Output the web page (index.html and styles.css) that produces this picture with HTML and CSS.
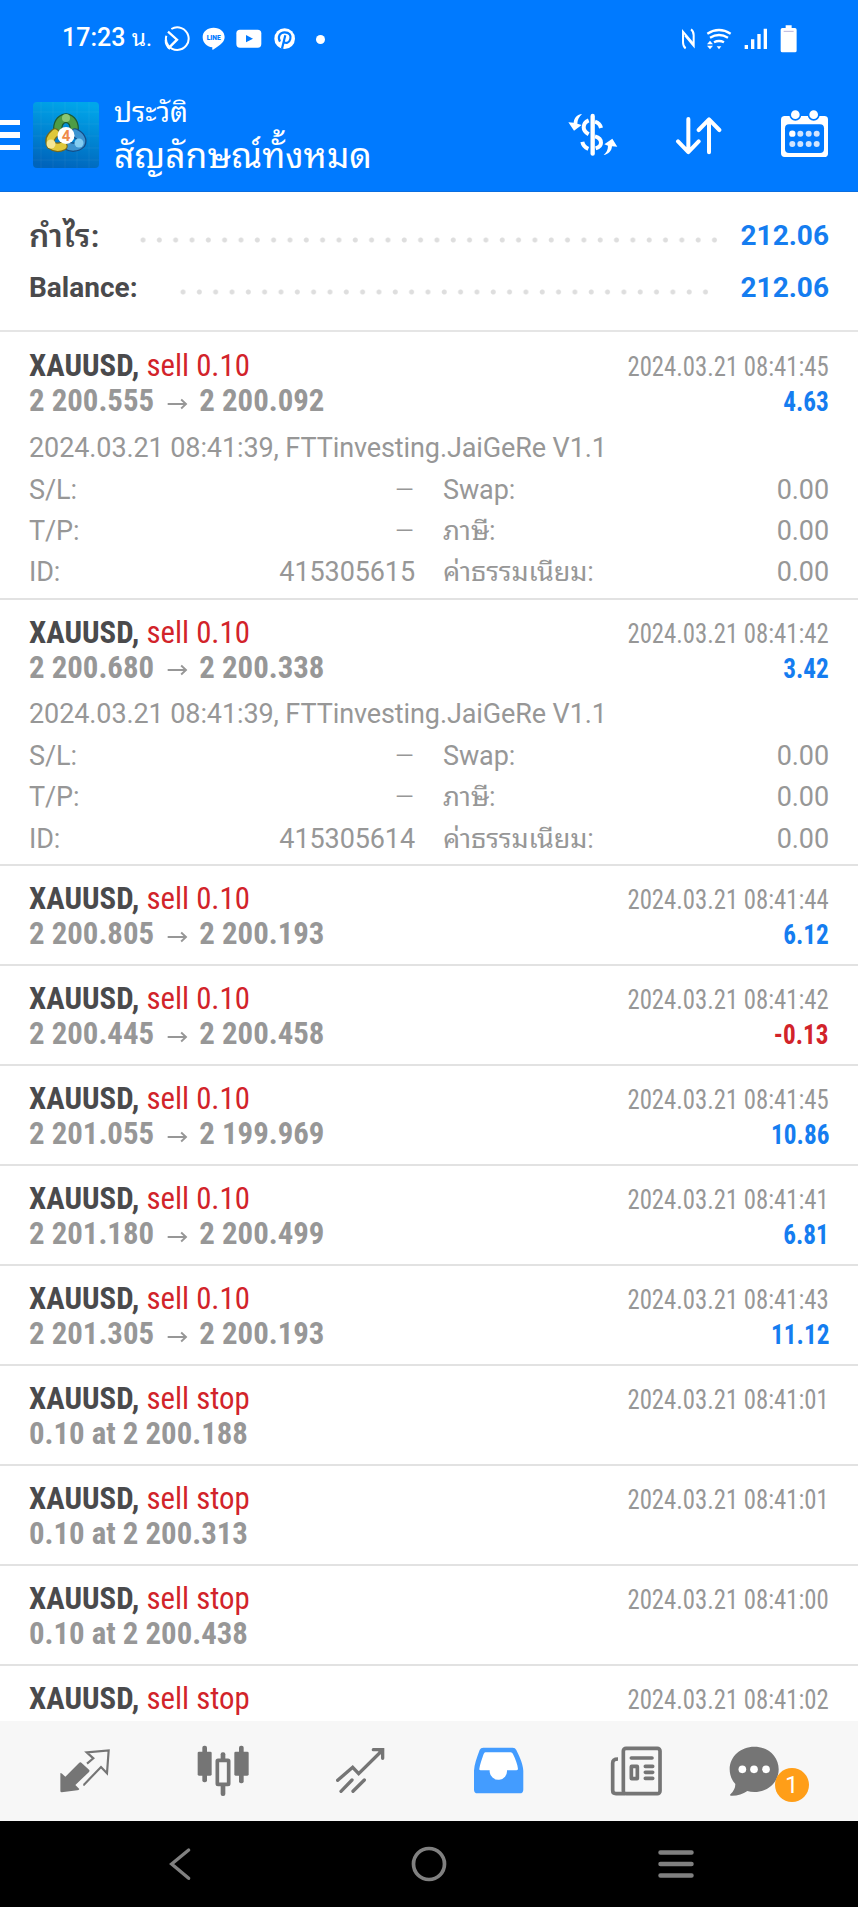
FILE: index.html
```html
<!DOCTYPE html>
<html lang="th">

<head>
    <meta charset="UTF-8">
    <meta name="viewport" content="width=device-width, initial-scale=1.0">
    <title>History</title>
    <link rel="stylesheet" href="styles.css">
</head>

<body>
    <div class="app">
        <header class="header">
            <!-- Phone status bar -->
            <div class="status-bar">
                <span class="clock">17:23 <span class="clock-th">น.</span></span>
                <svg class="st-chart" viewBox="493 75 80 80" width="26.7" height="26.7" fill="none" stroke="#fff" stroke-width="6">
                    <path d="M515 84A34 34 0 1 1 500 104"/>
                    <path d="M498 116a34 34 0 0 0 13 28"/>
                    <path d="M505 92l27 24-26 26" stroke-width="7"/>
                </svg>
                <svg class="st-line" viewBox="607 82 70 70" width="23.3" height="23.3">
                    <path fill="#fff" d="M642 84c19 0 33 12 33 28 0 7-3 13-8 18-6 7-19 15-27 20-3 1-2-2-2-7-17-2-29-14-29-31 0-16 14-28 33-28z"/>
                    <text x="642" y="120" text-anchor="middle" class="line-word">LINE</text>
                </svg>
                <svg class="st-video" viewBox="710 88 78 58" width="26" height="19.3">
                    <rect x="711" y="90" width="75" height="54" rx="11" fill="#fff"/>
                    <path d="M740 106l21 11-21 11z" fill="#007aff"/>
                </svg>
                <svg class="st-pin" viewBox="825 85 64 64" width="21.3" height="21.3" fill="none">
                    <circle cx="857" cy="117" r="31" fill="#fff"/>
                    <path d="M843 126c-8-14-1-28 14-28 14 0 20 9 17 20-3 12-14 15-20 8M859 107l-10 40" stroke="#007aff" stroke-width="6.5"/>
                </svg>
                <span class="st-dot"></span>
                <svg class="st-nfc" viewBox="756 84 44 66" width="14.7" height="22" fill="none" stroke="#fff" stroke-width="6">
                    <path d="M770 145c-6-4-8-10-8-18V95l31 37"/>
                    <path d="M786 88c6 4 8 10 8 18v31l-26-31"/>
                </svg>
                <svg class="st-wifi" viewBox="830 82 78 68" width="26" height="22.7" fill="none" stroke="#fff" stroke-width="7">
                    <path d="M834 99q35-22 70 0M842 111q27-16 54 0M854 125q15-8 30 0"/>
                    <path d="M833 131l9-11 9 11zM833 135h18l-9 11zM862 137h14l-7 9z" fill="#fff" stroke="none"/>
                </svg>
                <svg class="st-signal" viewBox="944 84 72 66" width="24" height="22" fill="#fff">
                    <path d="M946 135h10v12h-10zM965 118h10v29h-10zM984 102h10v45h-10zM1003 86h10v61h-10z"/>
                </svg>
                <svg class="st-battery" viewBox="1051 74 52 84" width="17.3" height="28" fill="#fff">
                    <path d="M1068 75h18v8h10q5 0 5 5v63q0 5-5 5h-38q-5 0-5-5V88q0-5 5-5h10z"/>
                    <path d="M1062 93h30" stroke="#b9b4dc" stroke-width="3"/>
                </svg>
            </div>

            <!-- Title and actions -->
            <div class="toolbar">
                <div class="menu"><i></i><i></i><i></i></div>
                <svg class="logo" viewBox="0 0 66 66" width="66" height="66">
                    <defs>
                        <linearGradient id="logo-bg" x1="0.6" y1="0" x2="0.4" y2="1">
                            <stop offset="0" stop-color="#00a6ea"/>
                            <stop offset="1" stop-color="#0064bb"/>
                        </linearGradient>
                    </defs>
                    <rect width="66" height="66" rx="4" fill="url(#logo-bg)"/>
                    <path d="M8 0v66M20 0v66M32 0v66M44 0v66M56 0v66M0 10h66M0 22h66M0 34h66M0 46h66M0 58h66" stroke="#fff" stroke-opacity=".05"/>
                    <g fill="none" stroke-linecap="round">
                        <path d="M25 29c-1-7 2-12 8-13 6 1 9 6 8 13" stroke="#1d5a35" stroke-width="9.500"/>
                        <path d="M25 29c-1-7 2-12 8-13 6 1 9 6 8 13" stroke="#4e9c45" stroke-width="7"/>
                        <path d="M42 31c6 3 8 7 6 11-4 4-10 4-15 1" stroke="#154c85" stroke-width="9.500"/>
                        <path d="M42 31c6 3 8 7 6 11-4 4-10 4-15 1" stroke="#3d94d1" stroke-width="7"/>
                        <path d="M22 31c-5 4-6 8-4 12 4 3 8 3 12 1" stroke="#75691c" stroke-width="9.500"/>
                        <path d="M22 31c-5 4-6 8-4 12 4 3 8 3 12 1" stroke="#dfc83b" stroke-width="7"/>
                    </g>
                    <circle cx="33" cy="16" r="4" fill="#8cc673"/>
                    <circle cx="18" cy="42" r="4.500" fill="#f4e795"/>
                    <circle cx="46" cy="41" r="4.500" fill="#83cdf2"/>
                    <circle cx="33" cy="33.500" r="8.500" fill="#fff"/>
                    <text x="33" y="38.500" text-anchor="middle" class="logo-four">4</text>
                </svg>
                <div class="titles">
                    <div class="subtitle">ประวัติ</div>
                    <div class="title">สัญลักษณ์ทั้งหมด</div>
                </div>
                <svg class="act-dollar" viewBox="410 336 156 136" width="52" height="45.3" fill="none" stroke="#fff">
                    <path d="M487 348v113" stroke-width="13" stroke-linecap="round"/>
                    <path d="M512 384c-2-10-9-16-18-19M475 361c-10 4-15 12-15 21 0 10 6 16 15 21M494 409c12 3 18 9 18 19 0 8-6 14-16 17M456 426c2 11 8 17 18 21" stroke-width="12"/>
                    <path d="M455 342c-13 1-24 11-25 26l-16-1 17 25 23-17-13-4c0-12 5-20 14-29zM520 465c13-1 24-11 25-26l16 1-15-24-24 17 11 4c0 12-4 20-13 28z" fill="#fff" stroke="none"/>
                </svg>
                <svg class="act-sort" viewBox="735 342 140 122" width="46.7" height="40.7" fill="none" stroke="#fff" stroke-width="12" stroke-linecap="round" stroke-linejoin="round">
                    <path d="M775 354v98M744 421l31 32 31-32M837 454v-98M806 387l31-32 31 32"/>
                </svg>
                <svg class="act-calendar" viewBox="1048 328 146 146" width="48.7" height="48.7">
                    <rect x="1051" y="349" width="141" height="123" rx="11" fill="#fff"/>
                    <rect x="1063" y="374" width="117" height="86" rx="12" fill="#007aff"/>
                    <g fill="#fff" stroke="#007aff" stroke-width="5">
                        <circle cx="1094" cy="345" r="15.500"/>
                        <circle cx="1149" cy="345" r="15.500"/>
                    </g>
                    <g fill="#cfe4ff">
                        <circle cx="1085" cy="402" r="9.500" fill="#fff"/><circle cx="1109" cy="402" r="9"/><circle cx="1134" cy="402" r="9"/><circle cx="1158" cy="402" r="9"/>
                        <circle cx="1085" cy="433" r="9"/><circle cx="1109" cy="433" r="9"/><circle cx="1134" cy="433" r="9"/><circle cx="1158" cy="433" r="9"/>
                    </g>
                </svg>
            </div>
        </header>

        <!-- Totals -->
        <section class="summary">
            <div class="sum-row">
                <span class="sum-label sum-label-th">กำไร:</span>
                <span class="dots dots-profit"></span>
                <span class="sum-value">212.06</span>
            </div>
            <div class="sum-row">
                <span class="sum-label">Balance:</span>
                <span class="dots dots-balance"></span>
                <span class="sum-value">212.06</span>
            </div>
        </section>

        <!-- Deals, filled in by the script -->
        <main class="deals" id="deals"></main>

        <nav class="tabs">
            <svg class="tab-quotes" viewBox="180 264 152 136" width="50.7" height="45.3">
                <path d="M181 339q4 0 10 7l5 4 41-41q4-4 8 0l22 20q3 3 0 7l-41 39 12 12q-2 4-6 4l-47 6q-4 0-4-4z" fill="#757575"/>
                <path d="M250 373l2 1 51-53 18 19 5-69-66 6 20 18-19 16" fill="none" stroke="#757575" stroke-width="6.500"/>
            </svg>
            <svg class="tab-chart" viewBox="589 255 156 155" width="52" height="51.7" fill="#757575">
                <rect x="605" y="257" width="14" height="110" rx="6"/>
                <rect x="591" y="275" width="42" height="72" rx="4"/>
                <rect x="715" y="257" width="14" height="113" rx="6"/>
                <rect x="701" y="275" width="43" height="72" rx="4"/>
                <rect x="660" y="277" width="14" height="131" rx="6"/>
                <rect x="650" y="301" width="34" height="72" rx="2" fill="#f7f7f7" stroke="#757575" stroke-width="11"/>
            </svg>
            <svg class="tab-trade" viewBox="1005 260 150 142" width="50" height="47.3" fill="none" stroke="#757575" stroke-width="10" stroke-linecap="round">
                <path d="M1013 360l45-39 18 19 72-71M1120 268h28v26M1023 393l33-34M1059 393l34-34"/>
                <path d="M1128 266h22v22z" fill="#757575" stroke="none"/>
            </svg>
            <svg class="tab-history" viewBox="128 260 154 142" width="51.3" height="47.3">
                <path d="M159 262h88q8 0 11 7c12 24 20 44 21 62v57q0 11-11 11H142q-11 0-11-11v-57c1-18 8-38 17-62q3-7 11-7z" fill="#439cff"/>
                <path d="M165 276h76q5 0 7 5c8 16 14 33 15 44q0 5-5 5h-28a26 26 0 0 1-52 5v-5h-27q-5 0-4-5c2-13 8-30 13-44q2-5 5-5z" fill="#fff"/>
            </svg>
            <svg class="tab-news" viewBox="541 255 158 152" width="52.7" height="50.7" fill="none" stroke="#757575" stroke-width="11">
                <rect x="581" y="262" width="110" height="136" rx="8"/>
                <path d="M565 294q-16 0-16 12v82q0 10 10 10h26"/>
                <path d="M605 291h62M647 316h22M647 334h22M647 352h22" stroke-linecap="round"/>
                <rect x="605" y="316" width="18" height="37" rx="1"/>
            </svg>
            <div class="tab-chat">
                <svg viewBox="898 255 152 152" width="50.7" height="50.7">
                    <path d="M974 257c41 0 73 29 73 68s-32 68-73 68q-12 0-21-3c-14 10-32 15-50 14-3-1-2-3 0-5q14-13 14-30c-11-12-17-27-17-44 0-39 33-68 74-68z" fill="#757575"/>
                    <g fill="#fff"><circle cx="938" cy="325" r="11.500"/><circle cx="973" cy="325" r="11.500"/><circle cx="1009" cy="325" r="11.500"/></g>
                </svg>
                <span class="badge">1</span>
            </div>
        </nav>

        <!-- Android buttons -->
        <footer class="system-nav">
            <svg class="nav-back" viewBox="505 560 75 102" width="25" height="34" fill="none" stroke="#808080" stroke-width="10" stroke-linecap="round">
                <path d="M567 569l-51 42 51 43"/>
            </svg>
            <svg class="nav-home" viewBox="0 0 36 36" width="36" height="36" fill="none" stroke="#808080" stroke-width="3.700">
                <circle cx="18" cy="18" r="15.500"/>
            </svg>
            <svg class="nav-recent" viewBox="0 0 36 30" width="36" height="30" stroke="#808080" stroke-width="4.500" stroke-linecap="round">
                <path d="M2.500 3.500h31M2.500 15h31M2.500 26.500h31"/>
            </svg>
        </footer>
    </div>

    <script>
        const deals = [
            { type: "sell 0.10", from: "2 200.555", to: "2 200.092", time: "08:41:45", profit: "4.63", id: "415305615" },
            { type: "sell 0.10", from: "2 200.680", to: "2 200.338", time: "08:41:42", profit: "3.42", id: "415305614" },
            { type: "sell 0.10", from: "2 200.805", to: "2 200.193", time: "08:41:44", profit: "6.12" },
            { type: "sell 0.10", from: "2 200.445", to: "2 200.458", time: "08:41:42", profit: "-0.13" },
            { type: "sell 0.10", from: "2 201.055", to: "2 199.969", time: "08:41:45", profit: "10.86" },
            { type: "sell 0.10", from: "2 201.180", to: "2 200.499", time: "08:41:41", profit: "6.81" },
            { type: "sell 0.10", from: "2 201.305", to: "2 200.193", time: "08:41:43", profit: "11.12" },
            { type: "sell stop", price: "0.10 at 2 200.188", time: "08:41:01" },
            { type: "sell stop", price: "0.10 at 2 200.313", time: "08:41:01" },
            { type: "sell stop", price: "0.10 at 2 200.438", time: "08:41:00" },
            { type: "sell stop", time: "08:41:02" }
        ];

        function renderDetails(deal) {
            return `
                <div class="comment">2024.03.21 08:41:39, FTTinvesting.JaiGeRe V1.1</div>
                <div class="details">
                    <span>S/L:</span><span class="num dash">–</span><span>Swap:</span><span class="num">0.00</span>
                    <span>T/P:</span><span class="num dash">–</span><span>ภาษี:</span><span class="num">0.00</span>
                    <span>ID:</span><span class="num">${deal.id}</span><span>ค่าธรรมเนียม:</span><span class="num">0.00</span>
                </div>
            `;
        }

        function renderDeals() {
            const list = document.getElementById("deals");

            deals.forEach((deal) => {
                const row = document.createElement("div");
                row.className = deal.id ? "deal open" : "deal";

                let price = deal.price || "";
                if (deal.from) {
                    price = `${deal.from}<svg class="arrow" viewBox="0 0 22 12" width="22" height="12"><path d="M1 6h19M15 1.500l5 4.500-5 4.500"/></svg>${deal.to}`;
                }

                let profit = "";
                if (deal.profit) {
                    profit = `<span class="profit ${deal.profit < 0 ? "loss" : ""}">${deal.profit}</span>`;
                }

                row.innerHTML = `
                    <div class="line">
                        <span class="symbol">XAUUSD, <span class="type">${deal.type}</span></span>
                        <span class="time">2024.03.21 ${deal.time}</span>
                    </div>
                    <div class="line">
                        <span class="price">${price}</span>
                        ${profit}
                    </div>
                    ${deal.id ? renderDetails(deal) : ""}
                `;
                list.appendChild(row);
            });
        }

        renderDeals();
    </script>
</body>

</html>
```
FILE: styles.css
```css
* {
    box-sizing: border-box;
}

body {
    margin: 0;
    font-family: Roboto, "Noto Sans Thai Looped", Loma, Garuda, "Noto Sans", sans-serif;
    background-color: #fff;
    color: #4a4a4c;
}

svg {
    display: block;
    flex-shrink: 0;
}

.app {
    display: flex;
    flex-direction: column;
    width: 858px;
    height: 1907px;
    overflow: hidden;
}

/* Header */
.header {
    flex-shrink: 0;
    height: 192px;
    background-color: #007aff;
    border-bottom: 1px solid #0a6ee0;
    color: #fff;
}

.status-bar {
    display: flex;
    align-items: center;
    height: 78px;
    padding-left: 62px;
}

.clock {
    width: 102px;
    font-size: 25px;
    font-weight: 500;
    line-height: 30px;
    margin-top: -2px;
    white-space: nowrap;
}

.clock-th {
    font-size: 23px;
    font-weight: 400;
}

.st-line {
    margin-left: 11px;
}

.line-word {
    font-family: Roboto, sans-serif;
    font-size: 20px;
    font-weight: 900;
    fill: #007aff;
}

.st-video {
    margin-left: 11px;
}

.st-pin {
    margin-left: 12px;
}

.st-dot {
    width: 9px;
    height: 9px;
    margin-left: 21px;
    border-radius: 50%;
    background-color: #fff;
}

.st-nfc {
    margin-left: 356px;
}

.st-wifi {
    margin-left: 10px;
}

.st-signal {
    margin-left: 12px;
}

.st-battery {
    margin-left: 12px;
}

.toolbar {
    display: flex;
    align-items: center;
    height: 114px;
}

.menu {
    display: flex;
    flex-direction: column;
    gap: 7px;
    width: 33px;
}

.menu i {
    width: 20px;
    height: 5.5px;
    background-color: #fff;
}

.titles {
    width: 452px;
    padding-top: 2px;
    padding-left: 15px;
    white-space: nowrap;
}

.subtitle {
    font-size: 28px;
    line-height: 40px;
}

.title {
    font-size: 35.3px;
    line-height: 46px;
}

.logo-four {
    font-family: Roboto, sans-serif;
    font-size: 15px;
    font-weight: 700;
    fill: #ee8a4a;
}

.act-dollar {
    margin-left: 16px;
}

.act-sort {
    margin-left: 56px;
}

.act-calendar {
    margin-left: 58px;
    margin-bottom: 3px;
}

/* Totals */
.summary {
    flex-shrink: 0;
    height: 140px;
    padding: 17px 29px 0;
    border-bottom: 2px solid #e5e5e5;
}

.sum-row {
    display: flex;
    align-items: center;
    height: 52px;
    font-size: 28px;
    font-weight: 700;
}

.sum-label {
    white-space: nowrap;
}

.sum-label-th {
    margin-top: -5px;
    font-size: 32px;
    font-weight: 600;
    letter-spacing: 0.4px;
}

.sum-value {
    color: #157df0;
}

.dots {
    flex-shrink: 0;
    height: 6px;
    margin-top: 10px;
    margin-left: auto;
    background: radial-gradient(circle at 8px 3px, #dedede 2px, transparent 3px) 0 0 / 16.33px 6px repeat-x;
}

.dots-profit {
    width: 588px;
    margin-right: 18px;
}

.dots-balance {
    width: 539px;
    margin-right: 27px;
}

/* Deals */
.deals {
    flex: 1;
    min-height: 0;
    padding-top: 1px;
    overflow: hidden;
}

.deal {
    height: 100px;
    padding: 15px 29px 0;
    border-bottom: 2px solid #e2e2e2;
}

.deal.open {
    height: 266.7px;
}

.line {
    display: flex;
    align-items: baseline;
    justify-content: space-between;
    height: 35px;
    line-height: 35px;
    font-stretch: 75%;
    white-space: nowrap;
}

.symbol {
    font-size: 32px;
    font-weight: 700;
    transform: scaleX(0.963);
    transform-origin: left;
}

.type {
    font-weight: 400;
    color: #d2232a;
}

.time {
    font-size: 27px;
    color: #979797;
    transform: scaleX(0.916);
    transform-origin: right;
}

.price {
    display: flex;
    align-items: center;
    font-size: 32px;
    font-weight: 700;
    color: #979797;
    transform: scaleX(0.963);
    transform-origin: left;
}

.arrow {
    margin: 6px 12px 0 13px;
    fill: none;
    stroke: #979797;
    stroke-width: 2;
}

.profit {
    font-size: 27px;
    font-weight: 700;
    color: #157df0;
    transform: scaleX(0.935);
    transform-origin: right;
}

.profit.loss {
    color: #d2232a;
}

.comment {
    margin-top: 8.5px;
    line-height: 42px;
    font-size: 27px;
    letter-spacing: -0.1px;
    color: #979797;
}

.details {
    display: grid;
    grid-template-columns: 80px 306px 200px 1fr;
    grid-auto-rows: 41.3px;
    margin-top: 1px;
    line-height: 41px;
    font-size: 27px;
    letter-spacing: -0.1px;
    color: #979797;
}

.details span:nth-child(4n + 3) {
    padding-left: 28px;
    white-space: nowrap;
}

.num {
    text-align: right;
}

.dash {
    font-size: 32px;
    font-weight: 300;
}

/* Bottom tabs */
.tabs {
    display: flex;
    align-items: center;
    flex-shrink: 0;
    height: 100px;
    padding-left: 60px;
    background-color: #f7f7f7;
}

.tab-chart {
    margin-left: 86px;
}

.tab-trade {
    margin-left: 86px;
}

.tab-history {
    margin-left: 88px;
}

.tab-news {
    margin-left: 86px;
}

.tab-chat {
    position: relative;
    margin-left: 66px;
}

.badge {
    position: absolute;
    left: 46px;
    top: 22px;
    width: 34px;
    height: 34px;
    border-radius: 50%;
    background-color: #ff9e18;
    color: #fff;
    font-size: 24px;
    line-height: 34px;
    text-align: center;
}

/* Android buttons */
.system-nav {
    display: flex;
    align-items: center;
    flex-shrink: 0;
    height: 86px;
    padding-left: 168px;
    background-color: #000;
}

.nav-home {
    margin-left: 218px;
}

.nav-recent {
    margin-left: 211px;
}
```
